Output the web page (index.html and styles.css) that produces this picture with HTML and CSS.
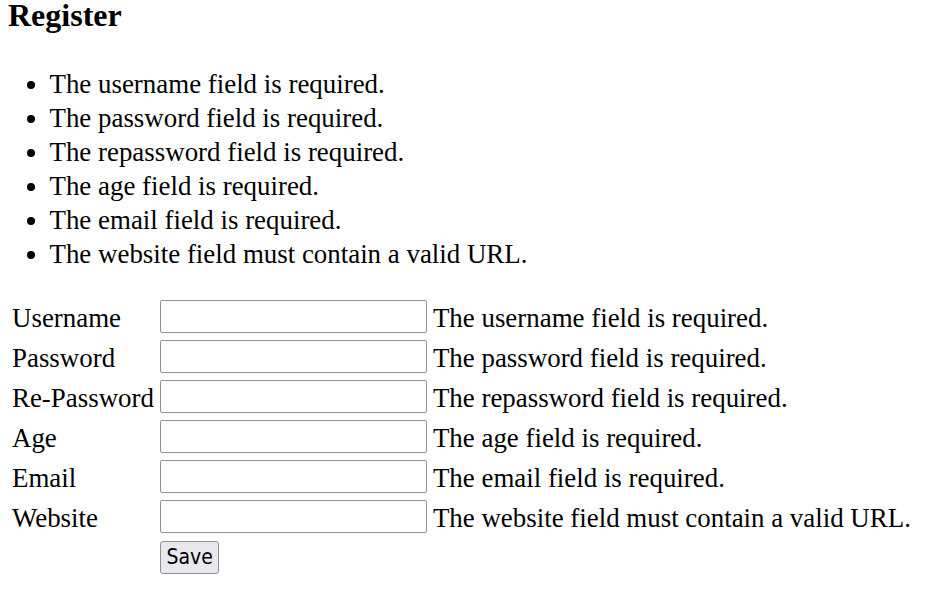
FILE: index.html
```html
<!DOCTYPE html>
<html lang="en">
<head>
<meta charset="utf-8">
<title>Register</title>
<link rel="stylesheet" href="styles.css">
</head>
<body class="page">
<h3 class="title">Register</h3>
<ul class="errors">
  <li>The username field is required.</li>
  <li>The password field is required.</li>
  <li>The repassword field is required.</li>
  <li>The age field is required.</li>
  <li>The email field is required.</li>
  <li>The website field must contain a valid URL.</li>
</ul>
<form class="form">
  <table class="fields">
    <tr>
      <td class="label">Username</td>
      <td class="control"><input class="field" type="text" name="username"></td>
      <td class="msg">The username field is required.</td>
    </tr>
    <tr>
      <td class="label">Password</td>
      <td class="control"><input class="field" type="password" name="password"></td>
      <td class="msg">The password field is required.</td>
    </tr>
    <tr>
      <td class="label">Re-Password</td>
      <td class="control"><input class="field" type="password" name="repassword"></td>
      <td class="msg">The repassword field is required.</td>
    </tr>
    <tr>
      <td class="label">Age</td>
      <td class="control"><input class="field" type="text" name="age"></td>
      <td class="msg">The age field is required.</td>
    </tr>
    <tr>
      <td class="label">Email</td>
      <td class="control"><input class="field" type="text" name="email"></td>
      <td class="msg">The email field is required.</td>
    </tr>
    <tr>
      <td class="label">Website</td>
      <td class="control"><input class="field" type="text" name="website"></td>
      <td class="msg">The website field must contain a valid URL.</td>
    </tr>
    <tr>
      <td class="label"></td>
      <td class="control"><button class="save" type="submit">Save</button></td>
      <td class="msg"></td>
    </tr>
  </table>
</form>
</body>
</html>
```
FILE: styles.css
```css
html, body {
  background: #ffffff;
}

.page {
  margin: 0 8px;
  font-family: "Liberation Serif", "Times New Roman", serif;
  font-size: 26.9px;
  line-height: 34px;
  color: #000000;
}

.title {
  margin: 0;
  font-size: 32px;
  line-height: 31px;
  font-weight: bold;
}

.errors {
  margin: 36px 0 24px 0;
  padding-left: 41.5px;
  list-style: disc;
}

.errors li {
  line-height: 34px;
}

.form {
  margin: 0;
}

.fields {
  border-collapse: separate;
  border-spacing: 2px;
}

.fields td {
  height: 34px;
  line-height: 34px;
  vertical-align: top;
  white-space: nowrap;
}

.label,
.msg {
  padding: 3.5px 2px 0.5px 2px;
}

.control {
  padding: 2px;
}

.field {
  display: block;
  box-sizing: border-box;
  width: 267px;
  height: 33px;
  margin: 1px 0 0 0;
  padding: 2px 4px;
  border: 1px solid #8f8f9d;
  border-radius: 2px;
  background: #ffffff;
  font-family: "DejaVu Sans Condensed", "DejaVu Sans", sans-serif;
  font-size: 20px;
}

.save {
  display: block;
  box-sizing: border-box;
  height: 33px;
  margin: 2px 0 0 0;
  padding: 0 5.5px;
  border: 1px solid #8f8f9d;
  border-radius: 3px;
  background: #e9e9ed;
  color: #000000;
  font-family: "DejaVu Sans Condensed", "DejaVu Sans", sans-serif;
  font-size: 21px;
  line-height: 31px;
}
```
